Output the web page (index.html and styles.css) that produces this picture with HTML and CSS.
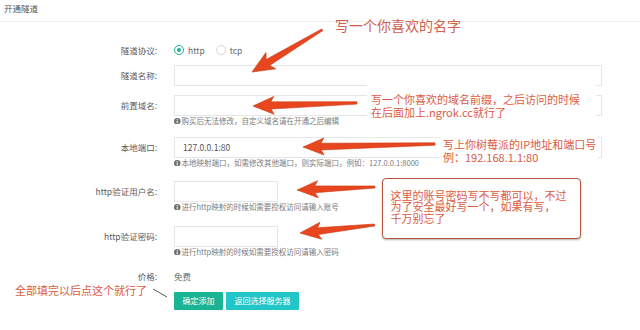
FILE: index.html
```html
<!DOCTYPE html>
<html lang="zh-CN">
<head>
<meta charset="utf-8">
<title>开通隧道</title>
<link rel="stylesheet" href="styles.css">
</head>
<body>
<div class="page">
  <div class="title">开通隧道</div>
  <form class="form">
    <div class="group g1">
      <label class="lbl">隧道协议:</label>
      <div class="ctl radios">
        <span class="radio on"></span><span class="rtext">http</span>
        <span class="radio"></span><span class="rtext">tcp</span>
      </div>
    </div>
    <div class="group g2">
      <label class="lbl">隧道名称:</label>
      <div class="ctl"><div class="input wide"></div></div>
    </div>
    <div class="group g3">
      <label class="lbl">前置域名:</label>
      <div class="ctl">
        <div class="input wide"></div>
        <div class="help"><svg class="ic" viewBox="0 0 10 10"><circle cx="5" cy="5" r="5" fill="#6f7173"/><rect x="4.2" y="4.2" width="1.6" height="4" fill="#fff"/><rect x="4.2" y="1.8" width="1.6" height="1.6" fill="#fff"/></svg>购买后无法修改，自定义域名请在开通之后编辑</div>
      </div>
    </div>
    <div class="group g4">
      <label class="lbl">本地端口:</label>
      <div class="ctl">
        <div class="input wide val">127.0.0.1:80</div>
        <div class="help"><svg class="ic" viewBox="0 0 10 10"><circle cx="5" cy="5" r="5" fill="#6f7173"/><rect x="4.2" y="4.2" width="1.6" height="4" fill="#fff"/><rect x="4.2" y="1.8" width="1.6" height="1.6" fill="#fff"/></svg>本地映射端口，如需修改其他端口，则实际端口，例如：127.0.0.1:8000</div>
      </div>
    </div>
    <div class="group g5">
      <label class="lbl">http验证用户名:</label>
      <div class="ctl">
        <div class="input short"></div>
        <div class="help"><svg class="ic" viewBox="0 0 10 10"><circle cx="5" cy="5" r="5" fill="#6f7173"/><rect x="4.2" y="4.2" width="1.6" height="4" fill="#fff"/><rect x="4.2" y="1.8" width="1.6" height="1.6" fill="#fff"/></svg>进行http映射的时候如需要授权访问请输入账号</div>
      </div>
    </div>
    <div class="group g6">
      <label class="lbl">http验证密码:</label>
      <div class="ctl">
        <div class="input short"></div>
        <div class="help"><svg class="ic" viewBox="0 0 10 10"><circle cx="5" cy="5" r="5" fill="#6f7173"/><rect x="4.2" y="4.2" width="1.6" height="4" fill="#fff"/><rect x="4.2" y="1.8" width="1.6" height="1.6" fill="#fff"/></svg>进行http映射的时候如需要授权访问请输入密码</div>
      </div>
    </div>
    <div class="group g7">
      <label class="lbl price-lbl">价格:</label>
      <div class="ctl price">免费</div>
    </div>
    <div class="group g8">
      <div class="lbl"></div>
      <div class="ctl btns">
        <span class="btn primary">确定添加</span>
        <span class="btn info">返回选择服务器</span>
      </div>
    </div>
  </form>

  <div class="note n1">写一个你喜欢的名字</div>
  <div class="note n2">写一个你喜欢的域名前缀，之后访问的时候<br>在后面加上.ngrok.cc就行了</div>
  <div class="note n3">写上你树莓派的IP地址和端口号<br>例：192.168.1.1:80</div>
  <div class="note n4">这里的账号密码写不写都可以，不过<br>为了安全最好写一个，如果有写，<br>千万别忘了</div>
  <div class="note n5">全部填完以后点这个就行了</div>

  <svg class="arrows" width="640" height="330" viewBox="0 0 640 330">
    <g fill="#e8461e" stroke="#c93c17" stroke-width="0.6" stroke-linejoin="round">
      <path transform="translate(252,72) rotate(-31)" d="M0,0 L22,-9.5 L18.5,-3.4 L82,-1 L82,1 L18.5,3.4 L22,9.5 Z"/>
      <path transform="translate(253,106) rotate(-1.7)" d="M0,0 L21,-9 L18,-3.6 L104,-1.2 L104,1.2 L18,3.6 L21,9 Z"/>
      <path transform="translate(303,147) rotate(-1.3)" d="M0,0 L21,-8.5 L18,-3.4 L132,-1.2 L132,1.2 L18,3.4 L21,8.5 Z"/>
      <path transform="translate(297,190) rotate(-2.2)" d="M0,0 L21,-8.5 L18,-3.4 L78,-1 L78,1 L18,3.4 L21,8.5 Z"/>
      <path transform="translate(300,233) rotate(-6.1)" d="M0,0 L21,-8.5 L18,-3.4 L75,-1 L75,1 L18,3.4 L21,8.5 Z"/>
    </g>
    <line x1="153" y1="289" x2="167" y2="297" stroke="#555" stroke-width="1"/>
  </svg>
</div>
</body>
</html>
```
FILE: styles.css
```css
html, body {
  margin: 0;
  padding: 0;
  background: #fff;
}
body {
  font-family: "Noto Sans CJK SC", "Noto Sans", sans-serif;
  color: #676a6c;
}
.page {
  position: relative;
  width: 640px;
  height: 330px;
  overflow: hidden;
  background: #fff;
}
.title {
  height: 21px;
  line-height: 16px;
  padding-left: 4px;
  font-size: 8.5px;
  color: #555;
  border-bottom: 1px solid #eceeef;
  box-sizing: content-box;
}
.form {
  margin: 0;
  padding-top: 18px;
}
.group {
  display: flex;
  align-items: flex-start;
}
.lbl {
  width: 157px;
  flex: none;
  text-align: right;
  font-size: 8.5px;
  line-height: 21px;
  height: 21px;
  color: #5a5c5e;
}
.ctl {
  margin-left: 17px;
}
.g1 { height: 20px; }
.g1 .lbl { line-height: 20px; height: 20px; }
.g2 { margin-top: 5px; }
.g3 { margin-top: 9px; }
.g4 { margin-top: 11px; }
.g5 { margin-top: 13px; }
.g6 { margin-top: 14px; }
.g7 { margin-top: 12px; }
.g8 { margin-top: 9px; }

.radios {
  display: flex;
  align-items: center;
  height: 20px;
  font-size: 8.5px;
  color: #676a6c;
}
.radio {
  width: 10px;
  height: 10px;
  border-radius: 50%;
  border: 1px solid #d6d8da;
  box-sizing: border-box;
  display: inline-block;
  position: relative;
}
.radio.on {
  border-color: #1ab394;
}
.radio.on::after {
  content: "";
  position: absolute;
  left: 2px;
  top: 2px;
  width: 4px;
  height: 4px;
  border-radius: 50%;
  background: #1ab394;
}
.rtext {
  margin-left: 4px;
  margin-right: 11px;
}
.input {
  height: 21px;
  box-sizing: border-box;
  border: 1px solid #e5e6e7;
  background: #fff;
}
.input.wide { width: 428px; }
.input.short { width: 104px; }
.input.val {
  font-size: 8.5px;
  line-height: 19px;
  padding-left: 8px;
  color: #555;
}
.help {
  font-size: 7.5px;
  line-height: 10px;
  height: 10px;
  color: #7a7c7e;
  white-space: nowrap;
  display: flex;
  align-items: center;
}
.ic {
  width: 6.5px;
  height: 6.5px;
  margin-right: 1px;
  flex: none;
}
.g7 .lbl, .price {
  line-height: 14px;
  height: 14px;
  font-size: 8.5px;
}
.price { color: #676a6c; }
.btns {
  display: flex;
  gap: 3px;
}
.btn {
  display: inline-block;
  height: 18px;
  line-height: 18px;
  font-size: 8px;
  color: #fff;
  text-align: center;
  border-radius: 1px;
}
.btn.primary { width: 49px; background: #1ab394; }
.btn.info { width: 73px; background: #23c6c8; }

.note {
  position: absolute;
  color: #dc5a3f;
  font-size: 11px;
  line-height: 13px;
  white-space: nowrap;
}
.n1 {
  left: 335px;
  top: 17px;
  font-size: 14px;
  line-height: 16px;
  color: #d0604a;
}
.n2 {
  left: 367px;
  top: 85px;
  width: 229px;
  height: 35px;
  padding: 7.5px 0 0 4px;
  box-sizing: border-box;
  background: #fff;
}
.n3 {
  left: 440px;
  top: 134px;
  width: 158px;
  height: 28px;
  padding: 3.5px 0 0 3px;
  box-sizing: border-box;
  background: #fff;
}
.n4 {
  left: 382px;
  top: 178px;
  width: 199px;
  height: 61px;
  box-sizing: border-box;
  border: 1.5px solid #b9553c;
  border-radius: 4px;
  background: #fff;
  box-shadow: 0 1px 2px rgba(0,0,0,0.3);
  padding: 10.5px 0 0 7.5px;
  line-height: 11.5px;
}
.n5 {
  left: 15px;
  top: 283.5px;
}
.arrows {
  position: absolute;
  left: 0;
  top: 0;
  pointer-events: none;
}
```
